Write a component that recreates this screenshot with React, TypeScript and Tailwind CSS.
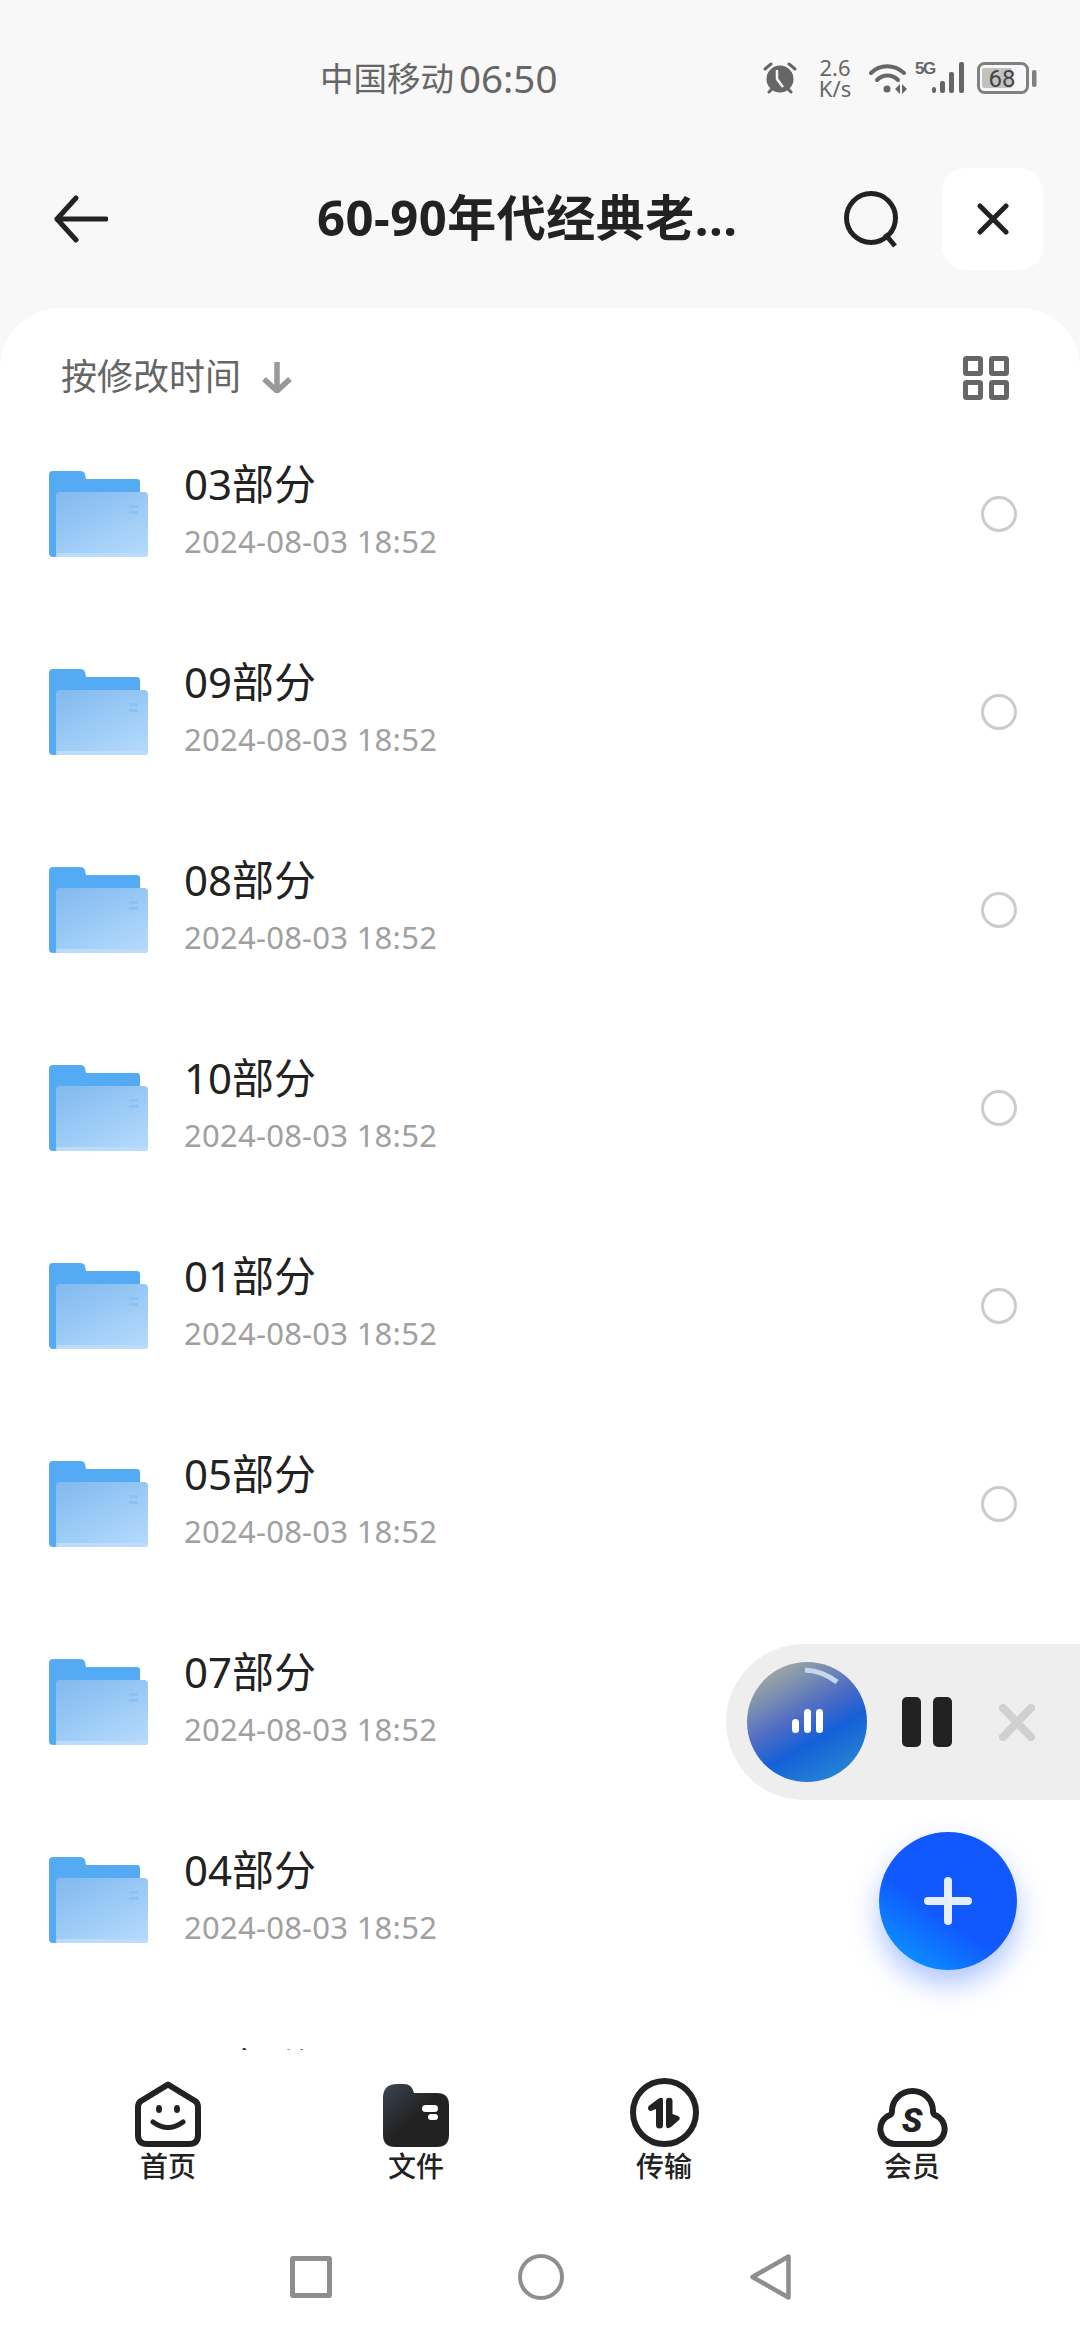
import React from "react";

const rows = ["03", "09", "08", "10", "01", "05", "07", "04", "02"];

function Folder() {
  return (
    <svg width="99" height="86" viewBox="0 0 99 86" className="shrink-0">
      <defs>
        <linearGradient id="front" x1="0.1" y1="0" x2="0.8" y2="1">
          <stop offset="0" stopColor="#84baef" />
          <stop offset="0.55" stopColor="#9ccbf6" />
          <stop offset="1" stopColor="#b3d8fb" />
        </linearGradient>
      </defs>
      <path d="M4 0H31Q35 0 36 3L37 8H88Q91 8 91 11V30H10V82Q10 86 5 86H4Q0 86 0 82V4Q0 0 4 0Z" fill="#55abf3" />
      <path d="M10 82V30H91V22H11Q7 22 7 26V86Z" fill="#55abf3" />
      <rect x="7" y="21" width="92" height="65" rx="4" fill="url(#front)" />
      <rect x="7" y="82" width="92" height="4" rx="2" fill="#bcdcfb" />
      <rect x="80" y="34" width="9" height="3" fill="#8cc2f2" />
      <rect x="80" y="40" width="9" height="3" fill="#8cc2f2" />
    </svg>
  );
}

function Row({ n }: { n: string }) {
  return (
    <div className="h-[198px] shrink-0 flex items-center pl-[49px] pr-[63px]">
      <Folder />
      <div className="ml-[36px] flex-1 flex flex-col pb-[12px]">
        <div className="text-[42px] leading-[56px] text-[#222222]">{n}部分</div>
        <div className="mt-[9px] text-[31px] tracking-[0.25px] leading-[40px] text-[#a0a0a0]">2024-08-03 18:52</div>
      </div>
      <div className="w-[36px] h-[36px] rounded-full border-[3px] border-[#cccccc]" />
    </div>
  );
}

function StatusIcons() {
  return (
    <div className="flex items-center ml-auto pr-[43px]">
      <svg width="34" height="32" viewBox="0 0 34 32">
        <path d="M2 7L8 2M32 7L26 2" stroke="#666" strokeWidth="3" strokeLinecap="round" />
        <circle cx="17" cy="17" r="13.5" fill="#666" />
        <path d="M14 8V17L20 25" stroke="#f8f8f8" strokeWidth="2.5" fill="none" />
        <path d="M6 30L9 27M28 30L25 27" stroke="#666" strokeWidth="3" strokeLinecap="round" />
      </svg>
      <div className="ml-[20px] w-[36px] flex flex-col items-center text-[#666666] text-[22px] leading-[21px]">
        <span>2.6</span>
        <span>K/s</span>
      </div>
      <svg className="ml-[16px]" width="38" height="32" viewBox="0 0 38 32">
        <path d="M2 11C11 2 25 2 35 11" stroke="#666" strokeWidth="4" fill="none" strokeLinecap="round" />
        <path d="M8 18C14 12 23 12 29 18" stroke="#666" strokeWidth="4" fill="none" strokeLinecap="round" />
        <circle cx="18" cy="27" r="3.5" fill="#666" />
        <path d="M26 27L31 22V32ZM33 22L38 27L33 32Z" fill="#666" />
      </svg>
      <div className="self-start ml-[8px] text-[17px] leading-[17px] font-bold text-[#666666] w-[17px] tracking-[-1.5px] mt-[3px] font-['Liberation_Sans',sans-serif]">5G</div>
      <svg width="33" height="32" viewBox="0 0 33 32">
        <rect x="0" y="25" width="4" height="6" rx="2" fill="#666" />
        <rect x="8" y="19" width="5" height="12" rx="2" fill="#666" />
        <rect x="17" y="10" width="5" height="21" rx="2" fill="#666" />
        <rect x="27" y="0" width="5" height="31" rx="2" fill="#666" />
      </svg>
      <svg className="ml-[12px]" width="60" height="32" viewBox="0 0 60 32">
        <rect x="1.5" y="1.5" width="49" height="29" rx="6" fill="none" stroke="#808080" strokeWidth="3" />
        <rect x="5" y="6" width="30" height="20" rx="2" fill="#c2c2c2" />
        <text x="25" y="25" textAnchor="middle" fontSize="24" fill="#444" fontFamily="Roboto, sans-serif">68</text>
        <rect x="55" y="8" width="4.5" height="17" rx="2" fill="#808080" />
      </svg>
    </div>
  );
}

export default function App() {
  return (
    <div className="relative w-[1080px] h-[2340px] overflow-hidden flex flex-col bg-[#f8f8f8] font-['Noto_Sans','Noto_Sans_CJK_SC',sans-serif]">
      {/* status bar */}
      <div className="h-[156px] shrink-0 flex items-center pl-[320px] text-[33.5px] text-[#666666]">
        <span>中国移动</span>
        <span className="ml-[5px] text-[38.5px] leading-[48px]">06:50</span>
        <StatusIcons />
      </div>

      {/* header */}
      <div className="mt-[12px] h-[102px] shrink-0 flex items-center pl-[54px] pr-[37px]">
        <svg width="54" height="48" viewBox="0 0 54 48">
          <path d="M22 3L3 24L22 45M3 24H52" stroke="#222" strokeWidth="5" fill="none" strokeLinecap="round" strokeLinejoin="round" />
        </svg>
        <div className="ml-[209px] w-[430px] pb-[4px] text-[49px] tracking-[0.5px] leading-[60px] font-bold text-[#222222] whitespace-nowrap">60-90年代经典老...</div>
        <svg className="ml-[96px]" width="58" height="58" viewBox="0 0 58 58">
          <circle cx="28" cy="28" r="24.5" stroke="#222" strokeWidth="5" fill="none" />
          <path d="M42 44L52 56" stroke="#222" strokeWidth="5" />
        </svg>
        <div className="ml-auto w-[101px] h-[102px] rounded-[24px] bg-white flex items-center justify-center">
          <svg width="32" height="32" viewBox="0 0 32 32">
            <path d="M3 3L29 29M29 3L3 29" stroke="#222" strokeWidth="5" strokeLinecap="round" />
          </svg>
        </div>
      </div>

      {/* sheet */}
      <div className="mt-[38px] flex-1 min-h-0 bg-white rounded-t-[60px] flex flex-col">
        <div className="h-[107px] shrink-0 pt-[31px] flex items-start pl-[61px] pr-[71px]">
          <div className="h-[76px] flex items-center text-[36px] text-[#666666]">
            <span>按修改时间</span>
            <svg className="ml-[20px]" width="32" height="32" viewBox="0 0 32 32">
              <path d="M16 1V30M3 18L16 30L29 18" stroke="#999" strokeWidth="5.5" fill="none" strokeLinejoin="round" />
            </svg>
          </div>
          <svg className="ml-auto mt-[17px]" width="46" height="44" viewBox="0 0 46 44">
            <g fill="none" stroke="#666" strokeWidth="5">
              <rect x="2.5" y="2.5" width="15" height="15" rx="1" />
              <rect x="28.5" y="2.5" width="15" height="15" rx="1" />
              <rect x="2.5" y="26.5" width="15" height="15" rx="1" />
              <rect x="28.5" y="26.5" width="15" height="15" rx="1" />
            </g>
          </svg>
        </div>

        <div className="h-[1635px] shrink-0 overflow-hidden flex flex-col">
          {rows.map((n) => (
            <Row key={n} n={n} />
          ))}
        </div>

        {/* bottom nav */}
        <div className="h-[164px] shrink-0 pt-[29px] px-[44px] grid grid-cols-4 bg-white">
          <NavItem label="首页">
            <svg width="66" height="66" viewBox="0 0 66 66">
              <path d="M33 3.5L60 20Q63 22 63 26V54Q63 63 54 63H12Q3 63 3 54V26Q3 22 6 20Z" fill="none" stroke="#222" strokeWidth="6" strokeLinejoin="round" />
              <ellipse cx="24" cy="28" rx="3" ry="4" fill="#222" />
              <ellipse cx="42" cy="28" rx="3" ry="4" fill="#222" />
              <path d="M18 41Q33 52 48 41" fill="none" stroke="#222" strokeWidth="5" strokeLinecap="round" />
            </svg>
          </NavItem>
          <NavItem label="文件">
            <svg width="66" height="63" viewBox="0 0 66 63">
              <defs>
                <linearGradient id="nf" x1="0" y1="0" x2="0.7" y2="0.75">
                  <stop offset="0" stopColor="#3d4553" />
                  <stop offset="0.7" stopColor="#222222" />
                </linearGradient>
              </defs>
              <path d="M14 0H21Q29 0 31 9H54Q66 9 66 21V51Q66 63 54 63H12Q0 63 0 51V14Q0 0 14 0Z" fill="url(#nf)" />
              <rect x="39" y="21" width="16" height="7" rx="3.5" fill="#fff" />
              <rect x="45" y="30" width="10" height="6" rx="3" fill="#fff" />
            </svg>
          </NavItem>
          <NavItem label="传输">
            <svg width="69" height="69" viewBox="0 0 69 69">
              <circle cx="34.5" cy="34.5" r="31.5" fill="none" stroke="#222" strokeWidth="6" />
              <path d="M33 22V47A3 3 0 0 1 26 47V31L21 33Q18 33 18 30Q18 28 20 27L28 21Q33 18 33 22Z" fill="#222" />
              <path d="M36 23A3.2 3.2 0 0 1 42.5 23V36L48 38Q51 40 49 42L41 49Q36 52 36 47Z" fill="#222" />
            </svg>
          </NavItem>
          <NavItem label="会员">
            <svg width="71" height="59" viewBox="0 0 71 59">
              <path d="M18 56A15 15 0 0 1 13 27Q15 26 15 23C15 12 24 3 35.5 3C47 3 56 12 56 23Q56 26 58 27A15 15 0 0 1 53 56Z" fill="none" stroke="#222" strokeWidth="6" strokeLinejoin="round" />
              <text x="35" y="44" textAnchor="middle" fontSize="34" fontWeight="900" fontStyle="italic" fill="#222" fontFamily="Roboto, sans-serif">S</text>
            </svg>
          </NavItem>
        </div>

        {/* system bar */}
        <div className="flex-1 flex items-center justify-center gap-[186px] bg-white">
          <div className="w-[42px] h-[42px] rounded-[3px] border-[5px] border-[#8e8e8e]" />
          <div className="w-[46px] h-[46px] rounded-full border-[4px] border-[#8e8e8e]" />
          <svg width="41" height="46" viewBox="0 0 41 46">
            <path d="M2.5 23L38.5 2.5V43.5Z" fill="none" stroke="#8e8e8e" strokeWidth="4.5" strokeLinejoin="round" />
          </svg>
        </div>
      </div>

      {/* mini player */}
      <div className="absolute left-[726px] right-0 top-[1644px] h-[156px] rounded-l-[78px] bg-[#eeeeee] flex items-center pl-[21px]">
        <div className="relative w-[120px] h-[120px] rounded-full bg-[linear-gradient(150deg,#a6ada3_8%,#7c8fb0_26%,#4f6cc4_44%,#1560d8_62%,#2d94d2_100%)] flex items-center justify-center">
          <svg className="absolute inset-0" width="120" height="120" viewBox="0 0 120 120">
            <path d="M58 8Q76 9 90 20" stroke="#c4d6ea" strokeWidth="5" fill="none" />
            <rect x="45" y="57" width="7" height="14" rx="3.5" fill="#fff" />
            <rect x="57" y="47" width="7" height="24" rx="3.5" fill="#fff" />
            <rect x="69" y="47" width="7" height="24" rx="3.5" fill="#fff" />
          </svg>
        </div>
        <div className="ml-[35px] w-[19px] h-[50px] rounded-[5px] bg-[#222222]" />
        <div className="ml-[12px] w-[19px] h-[50px] rounded-[5px] bg-[#222222]" />
        <svg className="ml-[47px]" width="36" height="37" viewBox="0 0 36 37">
          <path d="M4 4L32 33M32 4L4 33" stroke="#d0d0d0" strokeWidth="8" strokeLinecap="round" />
        </svg>
      </div>

      {/* fab */}
      <div className="absolute left-[879px] top-[1832px] w-[138px] h-[138px] rounded-full bg-[linear-gradient(35deg,#0a96ff_8%,#1159ff_42%,#1257ff_100%)] shadow-[0_14px_28px_rgba(30,90,255,0.35)] flex items-center justify-center">
        <svg width="48" height="48" viewBox="0 0 48 48">
          <path d="M24 4V44M4 24H44" stroke="#e6edff" strokeWidth="8" strokeLinecap="round" />
        </svg>
      </div>
    </div>
  );
}

function NavItem({ label, children }: { label: string; children: React.ReactNode }) {
  return (
    <div className="flex flex-col items-center">
      <div className="h-[70px] flex items-end pb-[2px]">{children}</div>
      <div className="-mt-[1px] text-[28px] leading-[36px] font-medium text-[#222222]">{label}</div>
    </div>
  );
}
